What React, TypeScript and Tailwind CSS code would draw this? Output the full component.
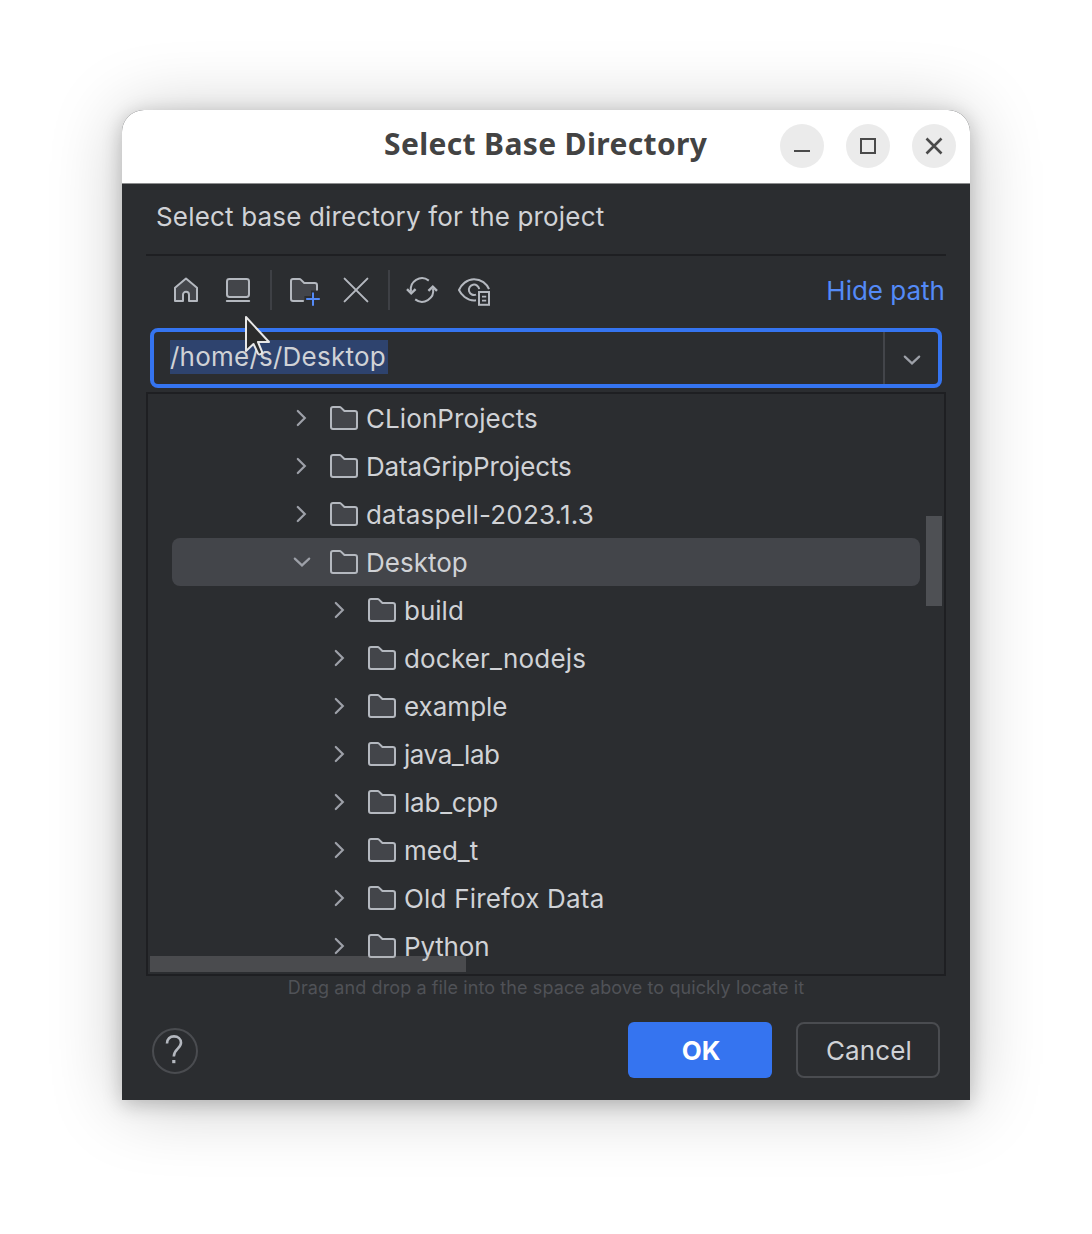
import type { ReactNode } from "react";

const STROKE = "#B4B8BF";
const FILL = "#43454A";

function Icon({ children, className = "" }: { children: ReactNode; className?: string }) {
  return (
    <svg viewBox="0 0 16 16" fill="none" className={"h-8 w-8 shrink-0 " + className}>
      {children}
    </svg>
  );
}

function HomeIcon() {
  return (
    <Icon>
      <path
        d="M2.5 13.5V6.9L8 2.3L13.5 6.9V13.5H9.5V10.4C9.5 9.5 8.85 8.9 8 8.9C7.15 8.9 6.5 9.5 6.5 10.4V13.5H2.5Z"
        fill={FILL}
        stroke={STROKE}
        strokeLinejoin="round"
      />
    </Icon>
  );
}

function DesktopIcon() {
  return (
    <Icon>
      <rect x="2.5" y="2.5" width="11" height="9" rx="1.2" fill={FILL} stroke={STROKE} />
      <path d="M2.4 13.5H13.6" stroke={STROKE} strokeLinecap="round" />
    </Icon>
  );
}

function NewFolderIcon() {
  return (
    <Icon className="overflow-visible">
      <path
        d="M1.5 3.5C1.5 2.9 1.95 2.5 2.5 2.5H5.7C5.95 2.5 6.2 2.6 6.4 2.8L8.1 4.5H13.4C14 4.5 14.5 5 14.5 5.6V8.2H11.5V11H8.2V13.5H2.5C1.95 13.5 1.5 13.05 1.5 12.5V3.5Z"
        fill={FILL}
      />
      <path
        d="M7.9 13.5H2.5C1.95 13.5 1.5 13.05 1.5 12.5V3.5C1.5 2.95 1.95 2.5 2.5 2.5H5.7C5.95 2.5 6.2 2.6 6.4 2.8L8.1 4.5H13.4C14 4.5 14.5 5 14.5 5.6V8.2"
        stroke={STROKE}
      />
      <path d="M12.5 9.2V15.9M9.1 12.5H15.9" stroke="#548AF7" />
    </Icon>
  );
}

function CloseIcon() {
  return (
    <Icon>
      <path d="M2.3 2.3L13.7 13.7M13.7 2.3L2.3 13.7" stroke={STROKE} strokeLinecap="round" />
    </Icon>
  );
}

function RefreshIcon() {
  return (
    <Icon>
      <path d="M11.4 3.3A5.6 5.6 0 0 0 2.5 8.8" stroke={STROKE} />
      <path d="M0.5 7.6L2.6 9.7L4.8 7.6" stroke={STROKE} strokeWidth="1.2" />
      <path d="M4.6 12.7A5.6 5.6 0 0 0 13.5 7.2" stroke={STROKE} />
      <path d="M11.2 8.4L13.4 6.3L15.5 8.4" stroke={STROKE} strokeWidth="1.2" />
    </Icon>
  );
}

function ShowHiddenIcon() {
  return (
    <Icon className="overflow-visible">
      <path
        d="M9 13.1C8.7 13.15 8.35 13.2 8 13.2C4.4 13.2 1.6 10.4 0.5 8C1.6 5.4 4.4 2.6 8 2.6C11.6 2.6 14.4 4.9 15.5 7.6"
        stroke={STROKE}
      />
      <path d="M9 10.3A2.6 2.6 0 1 1 10.6 7.6" stroke={STROKE} />
      <rect x="10.5" y="9" width="5" height="6.4" fill="#2B2D30" stroke={STROKE} />
      <path d="M12 11.3H14.1M12 13.3H14.1" stroke={STROKE} strokeWidth="0.9" />
    </Icon>
  );
}

function FolderIcon() {
  return (
    <Icon>
      <path
        d="M8.1 4.35L8.25 4.5H13.4C14.05 4.5 14.5 4.95 14.5 5.5V12.5C14.5 13.05 14.05 13.5 13.5 13.5H2.5C1.95 13.5 1.5 13.05 1.5 12.5V3.5C1.5 2.95 1.95 2.5 2.5 2.5H5.8C6.05 2.5 6.3 2.6 6.5 2.8L8.1 4.35Z"
        fill={FILL}
        stroke={STROKE}
      />
    </Icon>
  );
}

function Chevron({ open }: { open?: boolean }) {
  return (
    <Icon>
      <path
        d={open ? "M4.4 6.3L8 9.7L11.6 6.3" : "M5.9 4.5L9.4 8L5.9 11.5"}
        stroke="#9DA0A8"
        strokeWidth="1.1"
        strokeLinecap="round"
      />
    </Icon>
  );
}

type Row = { name: string; tracking: string; depth: 0 | 1; open?: boolean };

const rows: Row[] = [
  { name: "CLionProjects", tracking: "tracking-[0.08px]", depth: 0 },
  { name: "DataGripProjects", tracking: "tracking-[-0.17px]", depth: 0 },
  { name: "dataspell-2023.1.3", tracking: "tracking-[0.2px]", depth: 0 },
  { name: "Desktop", tracking: "tracking-normal", depth: 0, open: true },
  { name: "build", tracking: "tracking-normal", depth: 1 },
  { name: "docker_nodejs", tracking: "tracking-[0.18px]", depth: 1 },
  { name: "example", tracking: "tracking-normal", depth: 1 },
  { name: "java_lab", tracking: "tracking-[-0.45px]", depth: 1 },
  { name: "lab_cpp", tracking: "tracking-[-0.22px]", depth: 1 },
  { name: "med_t", tracking: "tracking-normal", depth: 1 },
  { name: "Old Firefox Data", tracking: "tracking-[0.18px]", depth: 1 },
  { name: "Python", tracking: "tracking-[-0.18px]", depth: 1 },
];

function TreeRow({ row }: { row: Row }) {
  return (
    <div
      className={
        "flex h-12 items-center rounded-lg " +
        (row.depth === 0 ? "pl-[114px] " : "pl-[152px] ") +
        (row.open ? "bg-[#43454A]" : "")
      }
    >
      <Chevron open={row.open} />
      <span className="ml-[10px] flex">
        <FolderIcon />
      </span>
      <span className={"ml-1.5 whitespace-nowrap pt-px " + row.tracking}>{row.name}</span>
    </div>
  );
}

function TitleButton({ children }: { children: ReactNode }) {
  return (
    <button className="flex h-11 w-11 items-center justify-center rounded-full bg-[#EBEBEB]">
      <svg viewBox="0 0 20 20" fill="none" stroke="#4a4a4a" strokeWidth="2" className="h-5 w-5">
        {children}
      </svg>
    </button>
  );
}

function Pointer() {
  return (
    <svg viewBox="0 0 28 42" className="absolute left-[122px] top-[131px] h-[42px] w-7">
      <path
        d="M2 2V36L9.5 29L14 38.5C15 40.4 18.8 38.8 18 36.6L14 27H25L2 2Z"
        fill="#2b2b2b"
        stroke="#e8e8e8"
        strokeWidth="2"
        strokeLinejoin="round"
      />
    </svg>
  );
}

export default function App() {
  return (
    <div className="flex h-[1234px] w-[1092px] justify-center overflow-hidden bg-white pt-[110px]">
      <div className="flex h-[990px] w-[848px] flex-col overflow-hidden rounded-t-[22px] bg-[#2B2D30] font-['Inter',sans-serif] text-[26px] leading-8 text-[#D0D2D6] shadow-[0_4px_20px_rgba(0,0,0,0.22),0_4px_72px_rgba(0,0,0,0.22)]">
        <header className="flex h-[74px] shrink-0 items-center border-b border-[#8c8d8e] bg-white pb-px">
          <h1 className="ml-[262px] w-[396px] whitespace-nowrap pb-1 font-['Noto_Sans',sans-serif] text-[30px] font-bold tracking-[0.36px] text-[#434343]">
            Select Base Directory
          </h1>
          <div className="flex gap-[22px]">
            <TitleButton>
              <path d="M2 15H18" />
            </TitleButton>
            <TitleButton>
              <rect x="3" y="3" width="14" height="14" />
            </TitleButton>
            <TitleButton>
              <path d="M2.5 2.5L17.5 17.5M17.5 2.5L2.5 17.5" strokeWidth="2.6" />
            </TitleButton>
          </div>
        </header>

        <main className="relative flex flex-1 flex-col px-6">
          <p className="h-[70px] whitespace-nowrap pl-2.5 pt-[17px] tracking-[0.17px]">
            Select base directory for the project
          </p>
          <div className="h-0.5 bg-[#1E1F22]" />

          <div className="flex h-[72px] items-center pb-1 pl-6">
            <div className="flex gap-5">
              <HomeIcon />
              <DesktopIcon />
            </div>
            <div className="mx-4 h-10 w-0.5 bg-[#3E4045]" />
            <div className="flex gap-5">
              <NewFolderIcon />
              <CloseIcon />
            </div>
            <div className="mx-4 h-10 w-0.5 bg-[#3E4045]" />
            <div className="flex gap-5">
              <RefreshIcon />
              <ShowHiddenIcon />
            </div>
            <a className="ml-auto mr-px whitespace-nowrap pt-px text-[#548AF7]">Hide path</a>
          </div>

          <div className="mx-1 flex h-[60px] rounded-lg border-4 border-[#3574F0]">
            <div className="flex flex-1 items-start pl-4 pt-2">
              <span className="h-[34px] whitespace-nowrap bg-[#2E436E] pr-0.5 leading-[33px] tracking-[0.23px]">
                /home/s/Desktop
              </span>
            </div>
            <div className="flex w-[55px] items-center justify-center border-l-2 border-[#43454A] pt-1">
              <Chevron open />
            </div>
          </div>

          <div className="relative mt-1 h-[584px] overflow-hidden border-2 border-[#1E1F22] px-6">
            {rows.map((r) => (
              <TreeRow key={r.name} row={r} />
            ))}
            <div className="absolute right-0.5 top-[122px] h-[90px] w-4 bg-[#4E5054]" />
            <div className="absolute bottom-0.5 left-0.5 h-4 w-[316px] bg-[#A6A6A6]/25" />
          </div>

          <p className="h-[46px] whitespace-nowrap text-center text-[18px] leading-6 tracking-[0.1px] text-[#505257]">
            Drag and drop a file into the space above to quickly locate it
          </p>

          <footer className="flex items-center px-1.5">
            <button className="mt-0.5 flex h-[46px] w-[46px] items-center justify-center rounded-full border-2 border-[#4A4C50]">
              <svg viewBox="0 0 20 32" fill="none" className="mb-0.5 mr-0.5 h-8 w-5">
                <path
                  d="M3 9.5C3 5 6 2.4 10 2.4C14 2.4 17 5 17 8.8C17 14.5 9.8 15 9.8 22.5"
                  stroke={STROKE}
                  strokeWidth="2.6"
                />
                <rect x="8.2" y="26" width="3.2" height="3.2" fill={STROKE} />
              </svg>
            </button>
            <button className="ml-auto h-14 w-36 rounded-md bg-[#3574F0] pl-0.5 pt-px font-bold text-white">
              OK
            </button>
            <button className="ml-6 h-14 w-36 rounded-lg border-2 border-[#4A4C50] pl-0.5 pt-px tracking-[0.15px]">
              Cancel
            </button>
          </footer>
          <Pointer />
        </main>
      </div>
    </div>
  );
}
